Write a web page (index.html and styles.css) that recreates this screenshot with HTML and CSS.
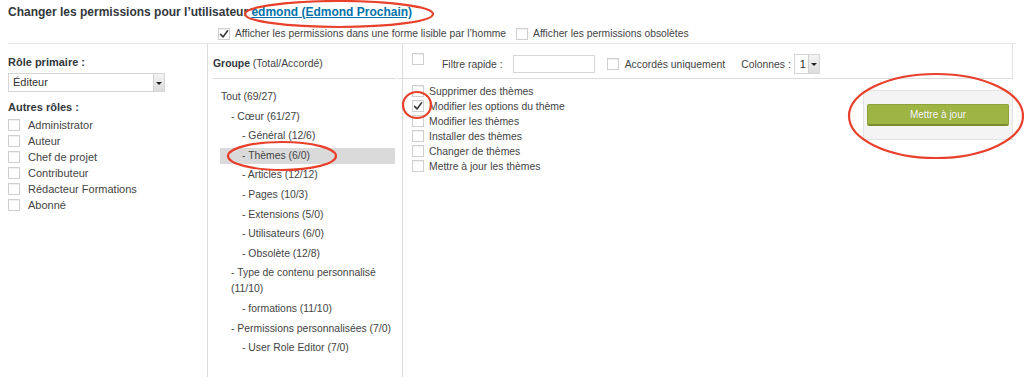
FILE: index.html
```html
<!DOCTYPE html>
<html lang="fr">
<head>
<meta charset="utf-8">
<title>Changer les permissions</title>
<link rel="stylesheet" href="styles.css">
</head>
<body>
<div class="page">
  <h2 class="title">Changer les permissions pour l’utilisateur <a href="#" class="user-link">edmond (Edmond Prochain)</a></h2>
  <div class="options">
    <label class="opt"><span class="cb checked"><svg viewBox="0 0 12 12"><path d="M2.6 6.4 L5 8.9 L9.6 2.8"/></svg></span>Afficher les permissions dans une forme lisible par l’homme</label>
    <label class="opt"><span class="cb"></span>Afficher les permissions obsolètes</label>
  </div>

  <div class="editor">
    <div class="col roles">
      <div class="label-bold">Rôle primaire :</div>
      <div class="select wide"><span class="select-value">Éditeur</span><span class="select-arrow"></span></div>
      <div class="label-bold other">Autres rôles :</div>
      <ul class="role-list">
        <li><span class="cb"></span>Administrator</li>
        <li><span class="cb"></span>Auteur</li>
        <li><span class="cb"></span>Chef de projet</li>
        <li><span class="cb"></span>Contributeur</li>
        <li><span class="cb"></span>Rédacteur Formations</li>
        <li><span class="cb"></span>Abonné</li>
      </ul>
    </div>

    <div class="col groups">
      <div class="groups-head"><b>Groupe</b> (Total/Accordé)</div>
      <ul class="tree">
        <li class="l0">Tout (69/27)</li>
        <li class="l1">- Cœur (61/27)</li>
        <li class="l2">- Général (12/6)</li>
        <li class="l2 active">- Thèmes (6/0)</li>
        <li class="l2">- Articles (12/12)</li>
        <li class="l2">- Pages (10/3)</li>
        <li class="l2">- Extensions (5/0)</li>
        <li class="l2">- Utilisateurs (6/0)</li>
        <li class="l2">- Obsolète (12/8)</li>
        <li class="l1">- Type de contenu personnalisé (11/10)</li>
        <li class="l2">- formations (11/10)</li>
        <li class="l1">- Permissions personnalisées (7/0)</li>
        <li class="l2">- User Role Editor (7/0)</li>
      </ul>
    </div>

    <div class="col caps">
      <div class="caps-head">
        <span class="cb top-cb"></span>
        <span class="filter-label">Filtre rapide :</span>
        <span class="text-input"></span>
        <span class="cb"></span>
        <span class="granted">Accordés uniquement</span>
        <span class="cols-label">Colonnes :</span>
        <div class="select small"><span class="select-value">1</span><span class="select-arrow"></span></div>
      </div>
      <div class="caps-body">
        <ul class="cap-list">
          <li><span class="cb"></span>Supprimer des thèmes</li>
          <li><span class="cb checked"><svg viewBox="0 0 12 12"><path d="M2.6 6.4 L5 8.9 L9.6 2.8"/></svg></span>Modifier les options du thème</li>
          <li><span class="cb"></span>Modifier les thèmes</li>
          <li><span class="cb"></span>Installer des thèmes</li>
          <li><span class="cb"></span>Changer de thèmes</li>
          <li><span class="cb"></span>Mettre à jour les thèmes</li>
        </ul>
        <div class="side-panel">
          <button class="btn-update" type="button">Mettre à jour</button>
        </div>
      </div>
    </div>
  </div>

  <svg class="annotations" viewBox="0 0 1024 377" width="1024" height="377">
    <ellipse cx="339" cy="14" rx="94" ry="13"/>
    <ellipse cx="417" cy="105" rx="14" ry="13"/>
    <ellipse cx="282" cy="156" rx="54" ry="14"/>
    <ellipse cx="936" cy="116" rx="87" ry="42"/>
  </svg>
</div>
</body>
</html>
```

FILE: styles.css
```css
* { box-sizing: border-box; }

html, body {
  margin: 0;
  padding: 0;
  background: #ffffff;
}

body {
  font-family: "Liberation Sans", Arial, Helvetica, sans-serif;
  color: #444444;
  overflow: hidden;
  width: 1024px;
  height: 377px;
}

.page {
  position: relative;
  padding: 4px 8px 0 8px;
  width: 1024px;
  height: 377px;
}

.title {
  margin: 0;
  font-size: 12px;
  line-height: 16px;
  font-weight: bold;
  color: #32373c;
}

.user-link {
  color: #0073aa;
  text-decoration: underline;
}

.options {
  margin-top: 6px;
  height: 17px;
  padding-left: 210px;
  display: flex;
  align-items: flex-start;
  font-size: 10.3px;
  line-height: 16px;
}

.opt {
  display: flex;
  align-items: center;
  height: 16px;
}

.opt .cb { margin-right: 5px; }
.opt + .opt { margin-left: 10px; }

/* checkbox */
.cb {
  display: inline-block;
  flex: none;
  width: 12px;
  height: 12px;
  border: 1px solid #cfcfcf;
  background: #ffffff;
  box-shadow: inset 0 1px 1px rgba(0,0,0,0.06);
  position: relative;
}

.cb svg {
  display: block;
  width: 12px;
  height: 12px;
  margin: -1px 0 0 -1px;
}

.cb svg path {
  fill: none;
  stroke: #3a3a3a;
  stroke-width: 1.6;
  stroke-linecap: round;
  stroke-linejoin: round;
}

/* editor table */
.editor {
  display: grid;
  grid-template-columns: 200px 195px 610px;
  border-top: 1px solid #e4e4e4;
  height: 340px;
}

.col {
  min-width: 0;
}

.roles {
  border-right: 1px solid #dcdcdc;
  padding-top: 11px;
  font-size: 11px;
}

.label-bold {
  font-weight: bold;
  font-size: 11px;
  line-height: 14px;
  color: #32373c;
}

.label-bold.other {
  margin-top: 8px;
}

.select {
  display: flex;
  border: 1px solid #d6d6d6;
  background: #ffffff;
}

.select.wide {
  width: 157px;
  height: 19px;
  margin-top: 4px;
}

.select-value {
  flex: 1;
  padding-left: 4px;
  font-size: 11px;
  line-height: 17px;
  color: #333333;
}

.select-arrow {
  width: 11px;
  flex: none;
  border-left: 1px solid #d0d0d0;
  background: linear-gradient(#f4f4f4, #dcdcdc);
  position: relative;
}

.select-arrow::after {
  content: "";
  position: absolute;
  left: 2px;
  top: 50%;
  margin-top: -1px;
  border-left: 3px solid transparent;
  border-right: 3px solid transparent;
  border-top: 3px solid #222222;
}

.role-list {
  list-style: none;
  margin: 3px 0 0 0;
  padding: 0;
}

.role-list li {
  display: flex;
  align-items: center;
  height: 16px;
  line-height: 16px;
  font-size: 11px;
}

.role-list .cb {
  margin-right: 8px;
}

/* groups */
.groups {
  border-right: 1px solid #dcdcdc;
  padding: 13px 6px 0 5px;
  font-size: 10.4px;
}

.groups-head {
  line-height: 14px;
  padding-bottom: 7px;
  border-bottom: 1px solid #dcdcdc;
  color: #444444;
}

.groups-head b {
  color: #32373c;
}

.tree {
  list-style: none;
  margin: 10px 1px 0 7px;
  padding: 0;
  display: flex;
  flex-direction: column;
  gap: 3.6px;
}

.tree li {
  line-height: 16px;
  font-size: 10.4px;
  color: #444444;
}

.tree .l0 { padding-left: 1px; }
.tree .l1 { padding-left: 11px; }
.tree .l2 { padding-left: 22px; }

.tree .active {
  background: #dadada;
}

/* capabilities */
.caps {
  font-size: 10.4px;
}

.caps-head {
  display: flex;
  align-items: center;
  height: 35px;
  padding: 6px 0 0 14px;
  margin-left: -5px;
  border-bottom: 1px solid #dcdcdc;
  border-right: 1px solid #e4e4e4;
}

.caps-head .top-cb {
  align-self: flex-start;
  margin-top: 3px;
}

.filter-label {
  margin-left: 18px;
}

.text-input {
  display: inline-block;
  width: 82px;
  height: 18px;
  margin-left: 10px;
  border: 1px solid #d6d6d6;
  background: #ffffff;
}

.text-input + .cb {
  margin-left: 12px;
}

.granted {
  margin-left: 6px;
}

.cols-label {
  margin-left: 16px;
}

.select.small {
  width: 26px;
  height: 20px;
  margin-left: 3px;
}

.select.small .select-value {
  font-size: 11px;
  line-height: 18px;
  padding-left: 5px;
}

.caps-body {
  display: flex;
  align-items: flex-start;
}

.cap-list {
  list-style: none;
  flex: 1;
  margin: 0;
  padding: 5px 0 0 9px;
}

.cap-list li {
  display: flex;
  align-items: center;
  height: 15px;
  line-height: 15px;
  font-size: 10.4px;
}

.cap-list .cb {
  margin-right: 5px;
  margin-top: -2px;
}

.side-panel {
  width: 150px;
  flex: none;
  margin-top: 11px;
  padding: 13px 3px;
  background: #f4f4f4;
  border: 1px solid #e3e3e3;
}

.btn-update {
  display: block;
  width: 100%;
  height: 22px;
  padding: 0;
  border: 1px solid #8ea23a;
  border-bottom: 2px solid #7a8c2e;
  border-radius: 2px;
  background: #9fb543;
  color: #ffffff;
  font-family: "Liberation Sans", Arial, Helvetica, sans-serif;
  font-size: 10px;
  line-height: 19px;
  text-shadow: 0 0 1px rgba(0,0,0,0.25);
  cursor: pointer;
}

/* annotation overlay */
.annotations {
  position: absolute;
  left: 0;
  top: 0;
  pointer-events: none;
}

.annotations ellipse {
  fill: none;
  stroke: #e8402a;
  stroke-width: 2.2;
}
```
